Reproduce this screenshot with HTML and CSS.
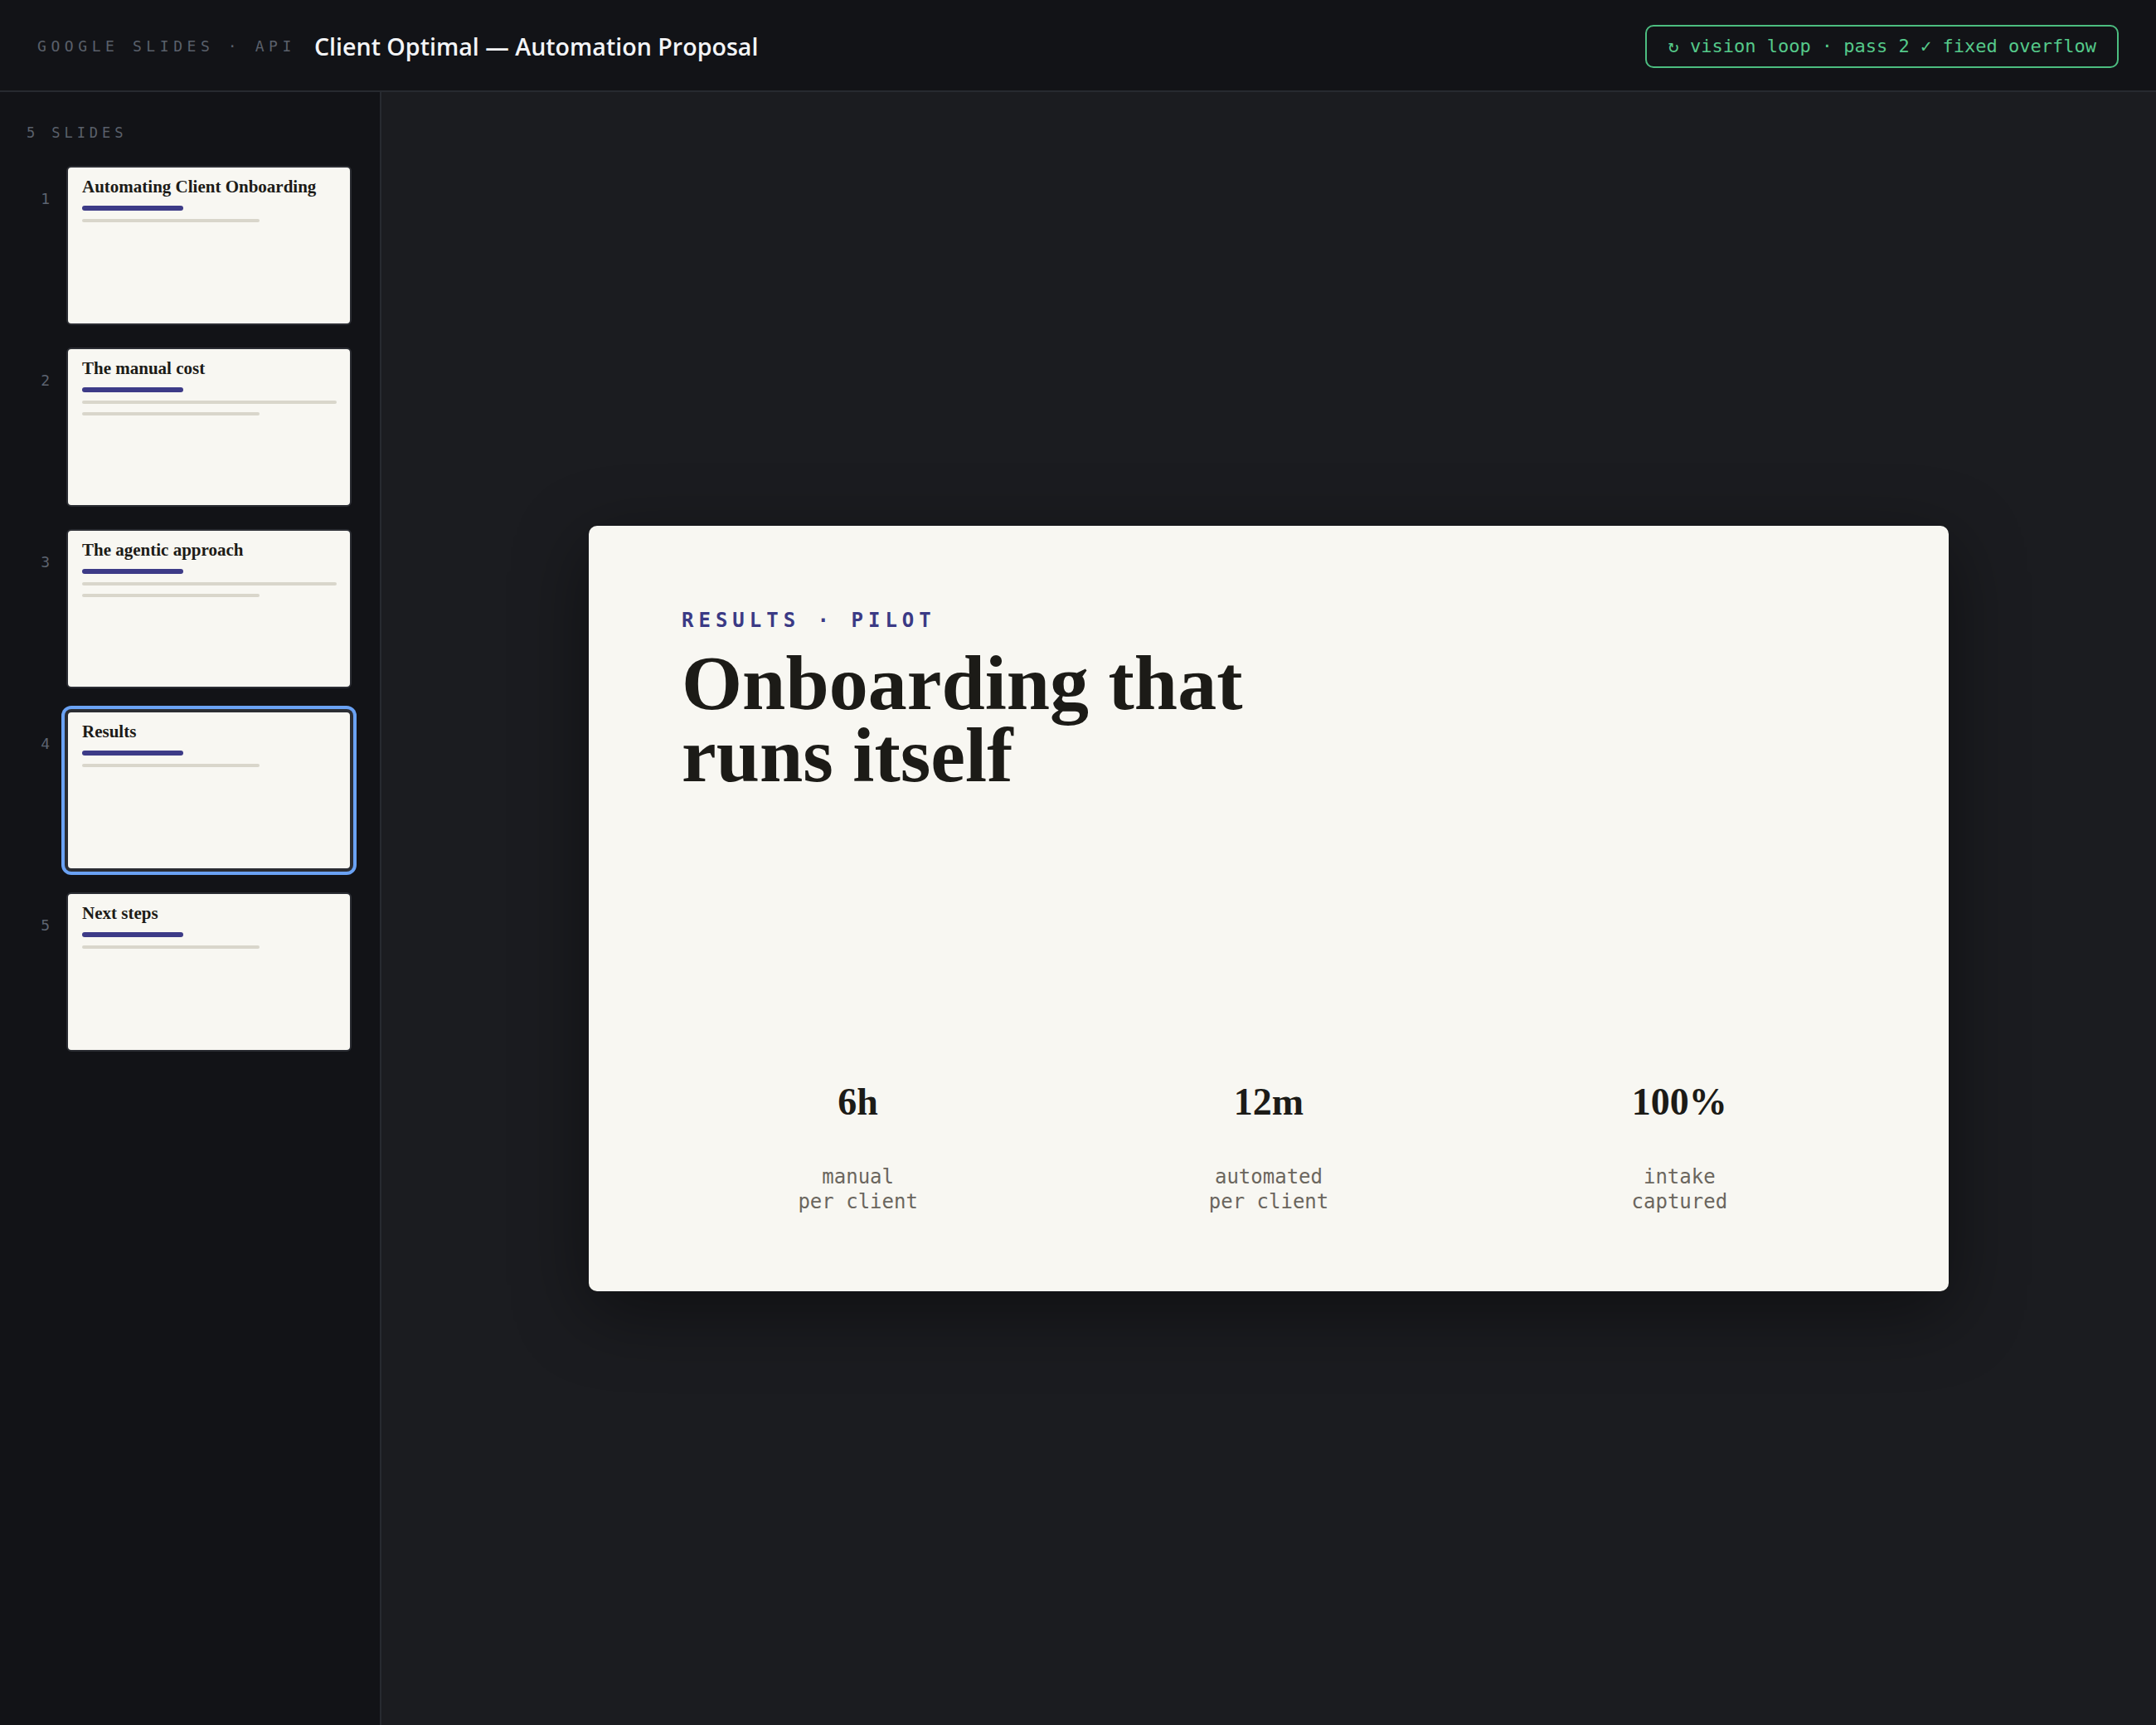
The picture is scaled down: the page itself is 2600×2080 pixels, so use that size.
FILE: index.html
```html
<!DOCTYPE html>
<html>

<head>
    <title>Client Optimal — Automation Proposal</title>
    <link rel="stylesheet" href="styles.css">
</head>

<body>
    <header class="topbar">
        <span class="brand">GOOGLE SLIDES · API</span>
        <span class="doc-title">Client Optimal — Automation Proposal</span>
        <span class="loop-badge">↻ vision loop · pass 2 ✓ fixed overflow</span>
    </header>

    <div class="workspace">
        <aside class="sidebar">
            <div class="sidebar-label">5 SLIDES</div>
            <ul class="thumbs">
                <li class="thumb-row">
                    <span class="thumb-num">1</span>
                    <div class="thumb">
                        <div class="thumb-title">Automating Client Onboarding</div>
                        <div class="thumb-bar"></div>
                        <div class="thumb-line short"></div>
                    </div>
                </li>
                <li class="thumb-row">
                    <span class="thumb-num">2</span>
                    <div class="thumb">
                        <div class="thumb-title">The manual cost</div>
                        <div class="thumb-bar"></div>
                        <div class="thumb-line"></div>
                        <div class="thumb-line short"></div>
                    </div>
                </li>
                <li class="thumb-row">
                    <span class="thumb-num">3</span>
                    <div class="thumb">
                        <div class="thumb-title">The agentic approach</div>
                        <div class="thumb-bar"></div>
                        <div class="thumb-line"></div>
                        <div class="thumb-line short"></div>
                    </div>
                </li>
                <li class="thumb-row">
                    <span class="thumb-num">4</span>
                    <div class="thumb selected">
                        <div class="thumb-title">Results</div>
                        <div class="thumb-bar"></div>
                        <div class="thumb-line short"></div>
                    </div>
                </li>
                <li class="thumb-row">
                    <span class="thumb-num">5</span>
                    <div class="thumb">
                        <div class="thumb-title">Next steps</div>
                        <div class="thumb-bar"></div>
                        <div class="thumb-line short"></div>
                    </div>
                </li>
            </ul>
        </aside>

        <main class="stage">
            <section class="slide">
                <div class="eyebrow">RESULTS · PILOT</div>
                <h1 class="headline">
                    <span class="headline-line">Onboarding that</span>
                    <span class="headline-line">runs itself</span>
                </h1>
                <div class="stats">
                    <div class="stat">
                        <div class="stat-value">6h</div>
                        <div class="stat-label">manual<br>per client</div>
                    </div>
                    <div class="stat">
                        <div class="stat-value">12m</div>
                        <div class="stat-label">automated<br>per client</div>
                    </div>
                    <div class="stat">
                        <div class="stat-value">100%</div>
                        <div class="stat-label">intake<br>captured</div>
                    </div>
                </div>
            </section>
        </main>
    </div>
</body>

</html>
```

FILE: styles.css
```css
body {
    margin: 0;
    height: 100vh;
    display: flex;
    flex-direction: column;
    background: #1b1c20;
    font-family: "Open Sans", "Liberation Sans", sans-serif;
}

.topbar {
    height: 111px;
    box-sizing: border-box;
    flex-shrink: 0;
    display: flex;
    align-items: center;
    padding: 2px 45px 0;
    background: #121317;
    border-bottom: 2px solid #272a30;
}

.brand {
    font-family: "DejaVu Sans Mono", monospace;
    font-size: 18px;
    letter-spacing: 0.31em;
    color: #5a606b;
    margin-right: 22px;
}

.doc-title {
    font-size: 28.6px;
    font-weight: 600;
    color: #f4f5f7;
}

.loop-badge {
    margin-left: auto;
    height: 52px;
    box-sizing: border-box;
    display: flex;
    align-items: center;
    padding: 0 25px;
    border: 2px solid #4cbd80;
    border-radius: 10px;
    font-family: "DejaVu Sans Mono", monospace;
    font-size: 22px;
    color: #55c98a;
}

.workspace {
    flex: 1;
    display: flex;
    min-height: 0;
}

.sidebar {
    width: 460px;
    box-sizing: border-box;
    flex-shrink: 0;
    background: #121317;
    border-right: 2px solid #272a30;
    padding: 38px 0 0 32px;
}

.sidebar-label {
    font-family: "DejaVu Sans Mono", monospace;
    font-size: 17px;
    line-height: 22px;
    letter-spacing: 0.29em;
    color: #5a606b;
    margin-bottom: 29px;
}

.thumbs {
    list-style: none;
    margin: 0;
    padding: 0;
    display: flex;
    flex-direction: column;
    gap: 27px;
}

.thumb-row {
    display: flex;
    gap: 20px;
}

.thumb-num {
    width: 28px;
    text-align: right;
    padding-top: 29px;
    font-family: "DejaVu Sans Mono", monospace;
    font-size: 18px;
    line-height: 22px;
    color: #5d6470;
}

.thumb {
    width: 344px;
    height: 192px;
    box-sizing: border-box;
    padding: 11px 16px 0 17px;
    background: #f8f7f2;
    border: 2px solid #2b2d33;
    border-radius: 6px;
}

.thumb.selected {
    box-shadow: 0 0 0 2px #2b2d33, 0 0 0 6px #6aa2f4;
}

.thumb-title {
    font-family: "Liberation Serif", serif;
    font-weight: bold;
    font-size: 21px;
    line-height: 25px;
    color: #1c1b17;
    white-space: nowrap;
}

.thumb-bar {
    width: 122px;
    height: 6px;
    border-radius: 3px;
    background: #3d3b87;
    margin: 10px 0 10px;
}

.thumb-line {
    height: 4px;
    border-radius: 2px;
    background: #d9d6cb;
    margin-bottom: 10px;
}

.thumb-line.short {
    width: 214px;
}

.stage {
    flex: 1;
    display: flex;
    align-items: center;
    justify-content: center;
}

.slide {
    width: 1640px;
    height: 923px;
    box-sizing: border-box;
    padding: 100px 112px 93px;
    background: #f8f7f2;
    border-radius: 10px;
    box-shadow: 0 24px 90px rgba(0, 0, 0, 0.45);
    display: flex;
    flex-direction: column;
}

.eyebrow {
    font-family: "DejaVu Sans Mono", monospace;
    font-weight: bold;
    font-size: 24px;
    line-height: 29px;
    letter-spacing: 0.25em;
    color: #3b3a85;
}

.headline {
    margin: 17px 0 0;
    font-family: "Liberation Serif", serif;
    font-weight: bold;
    font-size: 94px;
    line-height: 87px;
    color: #1c1b17;
}

.headline-line {
    display: block;
}

.stats {
    margin-top: auto;
    display: grid;
    grid-template-columns: repeat(3, 1fr);
    gap: 70px;
    text-align: center;
}

.stat-value {
    font-family: "Liberation Serif", serif;
    font-weight: bold;
    font-size: 46px;
    line-height: 51px;
    color: #1c1b17;
}

.stat-label {
    margin-top: 50px;
    font-family: "DejaVu Sans Mono", monospace;
    font-size: 24px;
    line-height: 30px;
    color: #6b665e;
}
```
